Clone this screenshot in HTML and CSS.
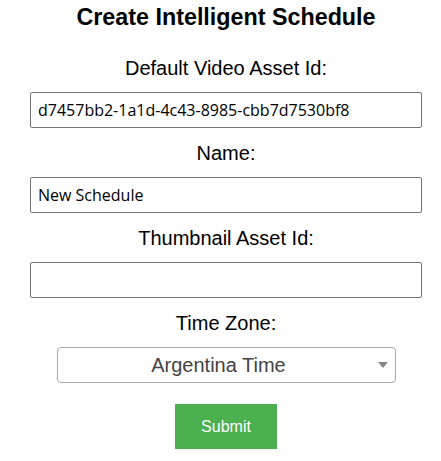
FILE: index.html
```html
<!DOCTYPE html>
<html lang="en">
<head>
<meta charset="utf-8">
<title>Create Intelligent Schedule</title>
<link rel="stylesheet" href="styles.css">
</head>
<body>
<form class="schedule-form">
  <h2 class="title">Create Intelligent Schedule</h2>
  <label class="field-label first" for="video">Default Video Asset Id:</label>
  <input class="text-input" id="video" type="text" value="d7457bb2-1a1d-4c43-8985-cbb7d7530bf8">
  <label class="field-label" for="name">Name:</label>
  <input class="text-input" id="name" type="text" value="New Schedule">
  <label class="field-label" for="thumb">Thumbnail Asset Id:</label>
  <input class="text-input" id="thumb" type="text" value="">
  <label class="field-label">Time Zone:</label>
  <div class="select-box">
    <span class="select-value">Argentina Time</span>
    <span class="select-arrow"></span>
  </div>
  <button class="submit-btn" type="button">Submit</button>
</form>
</body>
</html>
```

FILE: styles.css
```css
html, body {
  margin: 0;
  padding: 0;
  background: #ffffff;
}

body {
  font-family: "Liberation Sans", Arial, sans-serif;
  color: #000;
}

.schedule-form {
  width: 392px;
  margin-left: 30px;
  padding-top: 4px;
  display: flex;
  flex-direction: column;
  align-items: center;
}

.title {
  margin: 0;
  font-size: 23.3px;
  line-height: 27px;
  font-weight: bold;
  text-align: center;
}

.field-label {
  display: block;
  margin-top: 14px;
  font-size: 20px;
  line-height: 23px;
  text-align: center;
}

.field-label.first {
  margin-top: 26px;
}

.text-input {
  box-sizing: border-box;
  width: 392px;
  height: 36px;
  margin: 12px 0 0 0;
  padding: 0 7px;
  border: 1px solid #767676;
  border-radius: 2px;
  font-family: "Open Sans", "Liberation Sans", sans-serif;
  font-size: 16px;
  color: #000;
  background: #fff;
}

.select-box {
  box-sizing: border-box;
  width: 339px;
  height: 36px;
  margin-top: 12px;
  padding: 0 7px 0 8px;
  border: 1px solid #aaaaaa;
  border-radius: 4px;
  background: #fff;
  display: flex;
  align-items: center;
}

.select-value {
  flex: 1;
  text-align: center;
  font-size: 20px;
  color: #444444;
}

.select-arrow {
  width: 0;
  height: 0;
  margin-left: 6px;
  border-style: solid;
  border-width: 6px 5px 0 5px;
  border-color: #888888 transparent transparent transparent;
}

.submit-btn {
  margin-top: 21px;
  width: 102px;
  height: 45px;
  padding: 0;
  border: none;
  border-radius: 0;
  background: #4caf50;
  color: #ffffff;
  font-family: "Liberation Sans", Arial, sans-serif;
  font-size: 16px;
}
```
